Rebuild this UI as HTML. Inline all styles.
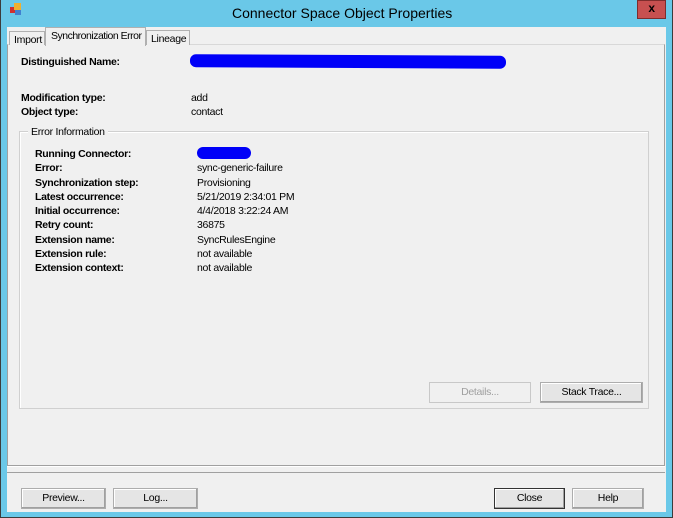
<!DOCTYPE html>
<html><head><style>
*{margin:0;padding:0;box-sizing:border-box}
body{width:673px;height:518px;background:#3c3c3c;position:relative;overflow:hidden;font-family:"Liberation Sans",sans-serif;font-size:10.5px;color:#000;letter-spacing:-0.3px}
.a{position:absolute;white-space:nowrap}
.frame{left:1px;top:0;width:671px;height:517px;background:#6ac8e8}
.client{left:7px;top:27px;width:659px;height:485px;background:#f0f0f0}
.panel{left:7px;top:44px;width:658px;height:422px;border:1px solid #a0a0a0;border-top-color:#d8d8d8;background:#f0f0f0}
.tab{border:1px solid #b0b0b0;border-bottom:none;background:#f0f0f0;padding:2px 4px 0;overflow:hidden}
.b{font-weight:bold}
.btn{height:21px;border:1px solid #adadad;background:#e5e5e5;text-align:center;line-height:19px;box-shadow:inset -1px -1px 0 #a0a0a0,inset 1px 1px 0 #fff}
.l{left:35px}.v{left:197px}
</style></head><body>
<div class="a frame"></div>
<div class="a" style="left:637px;top:0;width:29px;height:19px;background:#c75050;border:1px solid #7d2d2d;color:#000;font-weight:bold;font-size:12px;text-align:center;line-height:15px">x</div>
<div class="a" style="left:10px;top:7px;width:6px;height:6px;background:#d03030"></div>
<div class="a" style="left:14px;top:3px;width:7px;height:7px;background:#f0b030"></div>
<div class="a" style="left:15px;top:10px;width:6px;height:5px;background:#4080d0"></div>
<div class="a" style="left:232px;top:5px;font-size:14px;letter-spacing:0;color:#000">Connector Space Object Properties</div>
<div class="a client"></div>
<div class="a panel"></div>
<div class="a" style="left:7px;top:466px;width:658px;height:1px;background:#fff"></div>
<div class="a" style="left:7px;top:472px;width:658px;height:1px;background:#a0a0a0"></div>
<div class="a tab" style="left:9px;top:31px;height:14px;width:36px">Import</div>
<div class="a tab" style="left:45px;top:27px;height:19px;width:101px;padding-left:5px;letter-spacing:-0.5px">Synchronization Error</div>
<div class="a tab" style="left:146px;top:30px;height:15px;width:44px">Lineage</div>
<div class="a b" style="left:21px;top:56px">Distinguished Name:</div>
<div class="a" style="left:190px;top:55px;width:316px;height:13px;background:#0000f8;border-radius:6px;transform:rotate(0.3deg)"></div>
<div class="a b" style="left:21px;top:92px">Modification type:</div><div class="a" style="left:191px;top:92px">add</div>
<div class="a b" style="left:21px;top:106px">Object type:</div><div class="a" style="left:191px;top:106px">contact</div>
<div class="a" style="left:19px;top:131px;width:630px;height:278px;border:1px solid #d0d0d0;box-shadow:inset 1px 1px 0 #fff"></div>
<div class="a" style="left:28px;top:126px;background:#f0f0f0;padding:0 3px">Error Information</div>
<div class="a" style="left:197px;top:147px;width:54px;height:12px;background:#0000f8;border-radius:6px"></div>
<div class="a b l" style="top:148px">Running Connector:</div>
<div class="a b l" style="top:162px">Error:</div><div class="a v" style="top:162px">sync-generic-failure</div>
<div class="a b l" style="top:177px">Synchronization step:</div><div class="a v" style="top:177px">Provisioning</div>
<div class="a b l" style="top:191px">Latest occurrence:</div><div class="a v" style="top:191px">5/21/2019 2:34:01 PM</div>
<div class="a b l" style="top:205px">Initial occurrence:</div><div class="a v" style="top:205px">4/4/2018 3:22:24 AM</div>
<div class="a b l" style="top:219px">Retry count:</div><div class="a v" style="top:219px">36875</div>
<div class="a b l" style="top:234px">Extension name:</div><div class="a v" style="top:234px">SyncRulesEngine</div>
<div class="a b l" style="top:248px">Extension rule:</div><div class="a v" style="top:248px">not available</div>
<div class="a b l" style="top:262px">Extension context:</div><div class="a v" style="top:262px">not available</div>
<div class="a btn" style="left:429px;top:382px;width:102px;color:#a0a0a0;background:#f0f0f0;border-color:#c8c8c8;box-shadow:none">Details...</div>
<div class="a btn" style="left:540px;top:382px;width:103px">Stack Trace...</div>
<div class="a btn" style="left:21px;top:488px;width:85px">Preview...</div>
<div class="a btn" style="left:113px;top:488px;width:85px">Log...</div>
<div class="a btn" style="left:494px;top:488px;width:71px;border-color:#333">Close</div>
<div class="a btn" style="left:572px;top:488px;width:72px">Help</div>
</body></html>
